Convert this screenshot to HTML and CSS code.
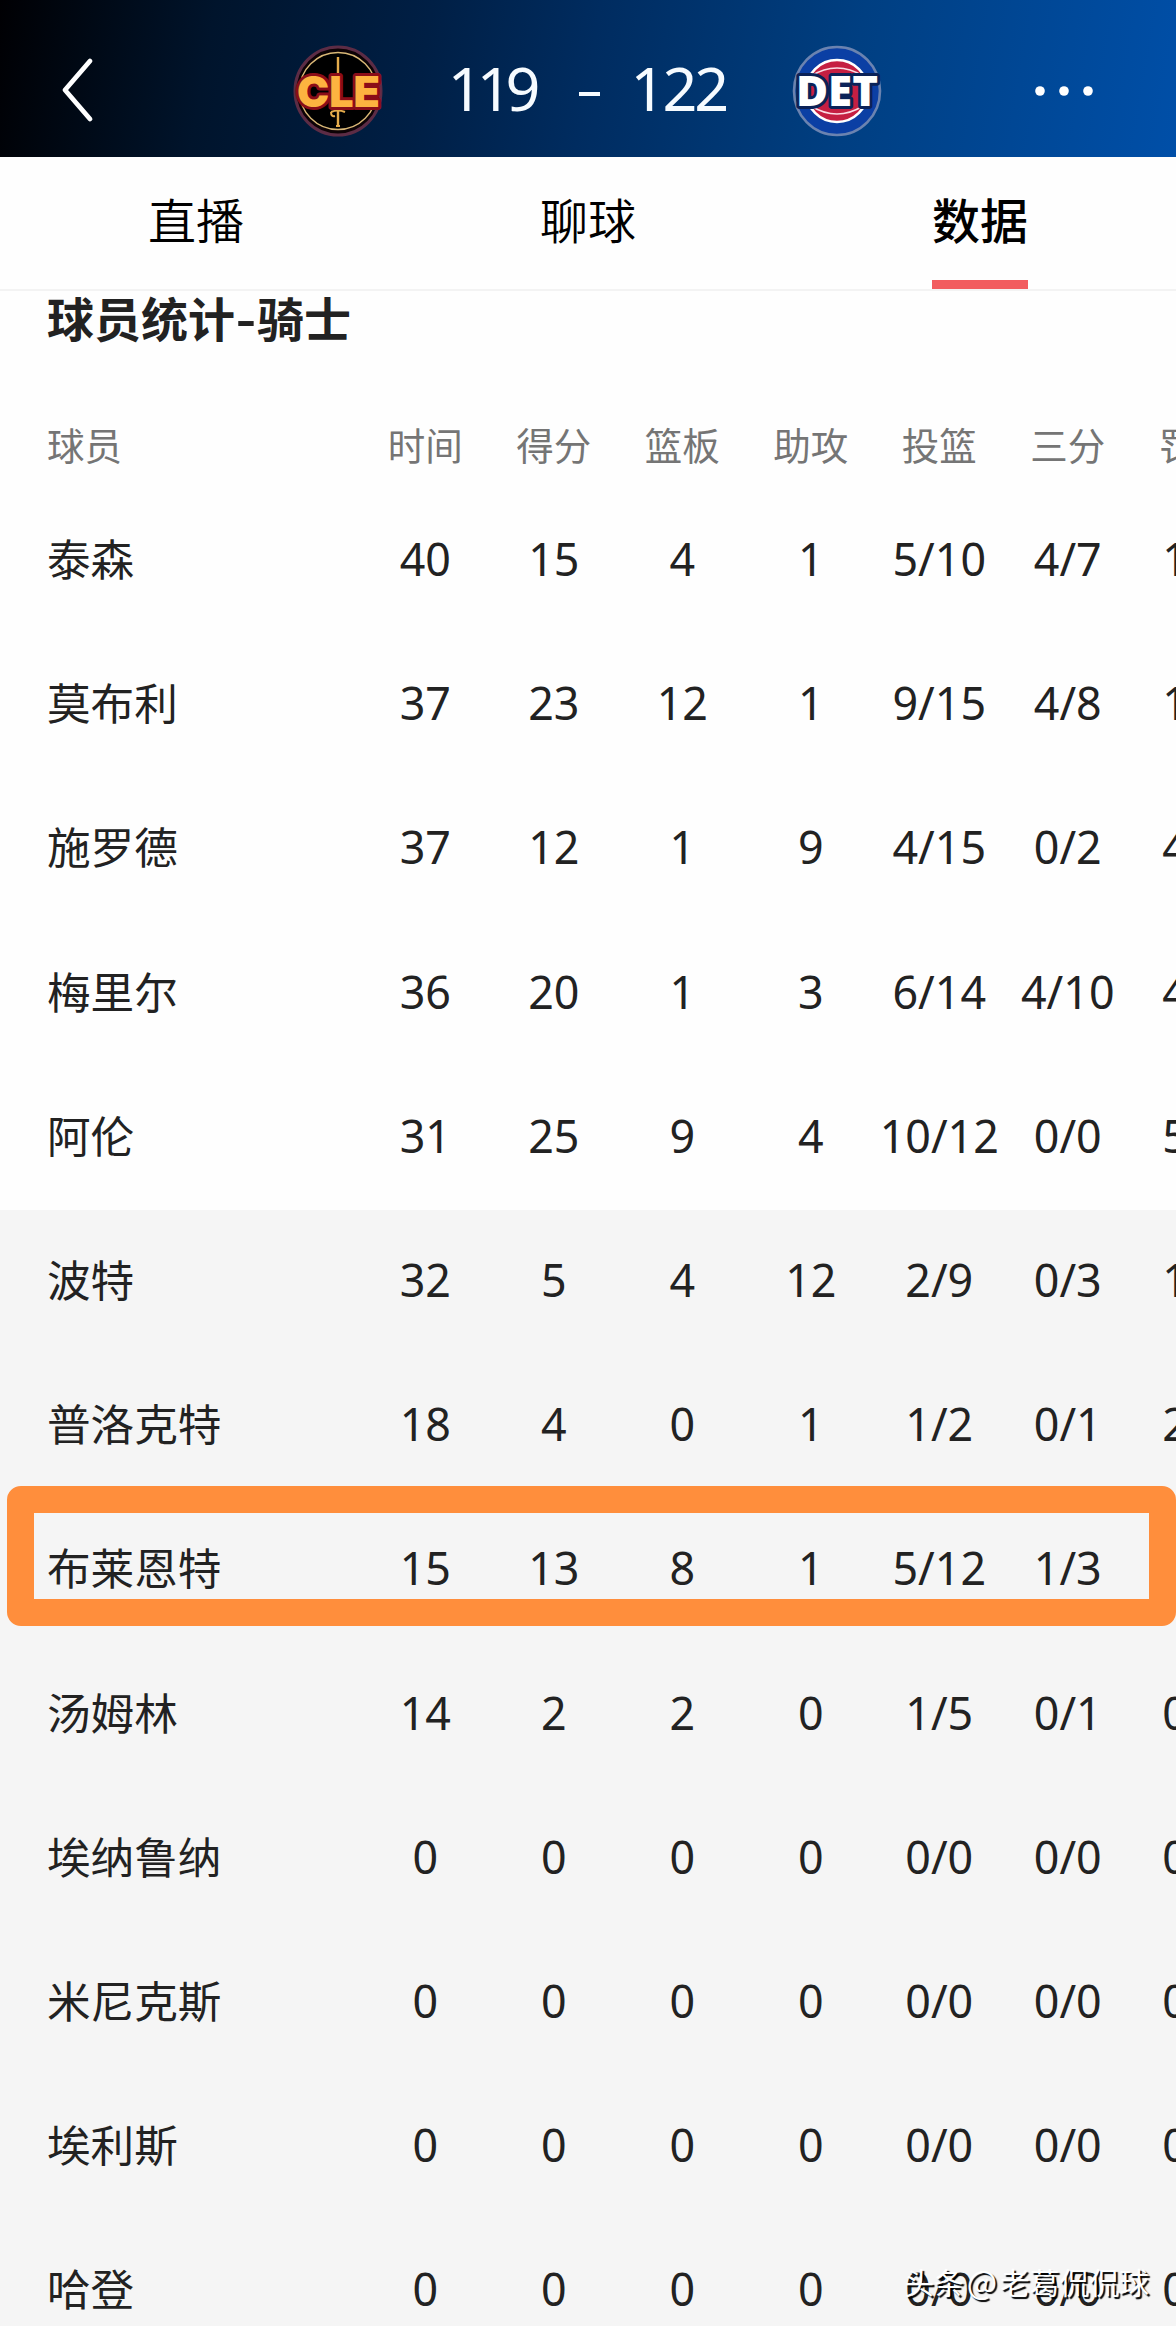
FILE: index.html
```html
<!doctype html>
<html lang="zh-CN">
<head>
<meta charset="utf-8">
<title>球员统计</title>
<link rel="stylesheet" href="styles.css">
</head>
<body>
<header class="topbar">
  <svg class="back" width="34" height="68" viewBox="0 0 34 68"><path d="M30 4 L5 33 L30 62" fill="none" stroke="#fff" stroke-width="4.8" stroke-linecap="round" stroke-linejoin="round"/></svg>
  <div class="match">
    <svg class="logo" width="96" height="96" viewBox="0 0 96 96">
      <ellipse cx="48" cy="48" rx="43" ry="44" fill="#0c0205" stroke="#5c2c45" stroke-width="3"/>
      <circle cx="48" cy="48" r="38.5" fill="#000" stroke="#d9b877" stroke-width="1.4"/>
      <path d="M48 14V36M48 66V84" stroke="#e5ac4c" stroke-width="2.4"/>
      <path d="M41 69q7-3 14 0M41 69q0 5 4 4M46 83h4" fill="none" stroke="#e5ac4c" stroke-width="2"/>
      <text class="cle" x="48.5" y="64" text-anchor="middle" textLength="83" lengthAdjust="spacingAndGlyphs">CLE</text>
    </svg>
    <div class="score">
      <span class="num home">119</span>
      <span class="dash"></span>
      <span class="num away">122</span>
    </div>
    <svg class="logo" width="96" height="96" viewBox="0 0 96 96">
      <ellipse cx="48" cy="48" rx="43" ry="44" fill="#0b3fa4" stroke="#6b83b0" stroke-width="2.6"/>
      <circle cx="48" cy="48" r="31" fill="#c51f42" stroke="#fff" stroke-width="2.6"/>
      <path d="M22 33Q48 17 74 33M22 63Q48 79 74 63" fill="none" stroke="#fbdce4" stroke-width="1.6"/>
      <text class="det" x="48" y="63" text-anchor="middle" textLength="82" lengthAdjust="spacingAndGlyphs">DET</text>
    </svg>
  </div>
  <svg class="more" width="60" height="12" viewBox="0 0 60 12"><circle cx="6" cy="6" r="4.8"/><circle cx="30" cy="6" r="4.8"/><circle cx="54" cy="6" r="4.8"/></svg>
</header>

<nav class="tabs">
  <a class="tab"><span>直播</span></a>
  <a class="tab"><span>聊球</span></a>
  <a class="tab active"><span>数据</span></a>
</nav>

<main>
  <h2 class="title">球员统计<i>-</i>骑士</h2>
  <div class="stats">
    <div class="row head"><span>球员</span><span>时间</span><span>得分</span><span>篮板</span><span>助攻</span><span>投篮</span><span>三分</span><span>罚球</span></div>
    <!-- 首发 -->
    <div class="row"><span>泰森</span><span>40</span><span>15</span><span>4</span><span>1</span><span>5/10</span><span>4/7</span><span>1/2</span></div>
    <div class="row"><span>莫布利</span><span>37</span><span>23</span><span>12</span><span>1</span><span>9/15</span><span>4/8</span><span>1/2</span></div>
    <div class="row"><span>施罗德</span><span>37</span><span>12</span><span>1</span><span>9</span><span>4/15</span><span>0/2</span><span>4/4</span></div>
    <div class="row"><span>梅里尔</span><span>36</span><span>20</span><span>1</span><span>3</span><span>6/14</span><span>4/10</span><span>4/4</span></div>
    <div class="row"><span>阿伦</span><span>31</span><span>25</span><span>9</span><span>4</span><span>10/12</span><span>0/0</span><span>5/6</span></div>
    <!-- 替补 -->
    <div class="row bench"><span>波特</span><span>32</span><span>5</span><span>4</span><span>12</span><span>2/9</span><span>0/3</span><span>1/2</span></div>
    <div class="row bench"><span>普洛克特</span><span>18</span><span>4</span><span>0</span><span>1</span><span>1/2</span><span>0/1</span><span>2/2</span></div>
    <div class="row bench marked"><span>布莱恩特</span><span>15</span><span>13</span><span>8</span><span>1</span><span>5/12</span><span>1/3</span><span></span></div>
    <div class="row bench"><span>汤姆林</span><span>14</span><span>2</span><span>2</span><span>0</span><span>1/5</span><span>0/1</span><span>0/0</span></div>
    <div class="row bench"><span>埃纳鲁纳</span><span>0</span><span>0</span><span>0</span><span>0</span><span>0/0</span><span>0/0</span><span>0/0</span></div>
    <div class="row bench"><span>米尼克斯</span><span>0</span><span>0</span><span>0</span><span>0</span><span>0/0</span><span>0/0</span><span>0/0</span></div>
    <div class="row bench"><span>埃利斯</span><span>0</span><span>0</span><span>0</span><span>0</span><span>0/0</span><span>0/0</span><span>0/0</span></div>
    <div class="row bench"><span>哈登</span><span>0</span><span>0</span><span>0</span><span>0</span><span>0/0</span><span>0/0</span><span>0/0</span></div>
  </div>
</main>
<div class="watermark">头条<b>@</b>老葛侃侃球</div>
</body>
</html>
```
FILE: styles.css
```css
*, *::after {
  box-sizing: border-box;
}
html {
  overflow: hidden;
}
body {
  margin: 0;
  position: relative;
  width: 1176px;
  height: 2326px;
  overflow: hidden;
  background: #fefefe;
  color: #222;
  font-family: "Noto Sans", "Noto Sans CJK SC", sans-serif;
}

/* 顶部比分 */
.topbar {
  display: flex;
  align-items: center;
  justify-content: space-between;
  height: 157px;
  padding: 24px 82px 0 60px;
  background: linear-gradient(100deg, #000003 0%, #00142c 18%, #001f45 36%, #002c60 50%, #003f82 72%, #004fa8 100%);
}
.back {
  display: block;
}
.match {
  display: flex;
  align-items: center;
  width: 595px;
  margin-left: 46px;
}
.logo {
  display: block;
  flex: none;
  overflow: visible;
}
.cle, .det {
  paint-order: stroke;
  stroke-linejoin: round;
  font-weight: 900;
}
.cle {
  font-family: Inter, "Liberation Sans", sans-serif;
  font-size: 43px;
  fill: #fdb340;
  stroke: #8a0d18;
  stroke-width: 6px;
}
.det {
  font-family: "Noto Sans", sans-serif;
  font-size: 43px;
  fill: #fff;
  stroke: #0b2258;
  stroke-width: 6px;
}
.score {
  flex: 1;
  display: flex;
  align-items: center;
  justify-content: center;
  height: 70px;
  color: #f6fbff;
  font-size: 61px;
  line-height: 70px;
}
.num {
  margin-top: -6px;
}
.home {
  letter-spacing: -6px;
  margin-right: 44px;
}
.away {
  letter-spacing: -3px;
  margin-left: 31px;
}
.dash {
  width: 21px;
  height: 4px;
  margin-top: 7px;
  background: #f6fbff;
}
.more {
  display: block;
  fill: #fff;
}

/* 标签栏 */
.tabs {
  display: flex;
  height: 134px;
  background: #fefefe;
  border-bottom: 2px solid #f3f3f3;
}
.tab {
  flex: 1;
  display: flex;
  justify-content: center;
  color: #000;
  font-family: "Noto Sans CJK SC", sans-serif;
  font-size: 48px;
  font-weight: 350;
  line-height: 122px;
}
.tab span {
  height: 132px;
}
.active {
  font-weight: 500;
}
.active span {
  border-bottom: 9px solid #f25c5f;
}

.title {
  margin: 0;
  height: 112px;
  padding-left: 47px;
  font-family: "Noto Sans CJK SC", sans-serif;
  font-size: 47px;
  font-weight: 700;
  line-height: 52px;
}
.title i {
  display: inline-block;
  width: 22px;
  text-align: center;
  font-style: normal;
  transform: scaleX(1.2);
}

/* 数据表 */
.row {
  display: grid;
  grid-template-columns: 361px repeat(7, 128.5px);
  align-items: center;
  position: relative;
  width: 1261px;
  height: 144.2px;
  padding-bottom: 4px;
  font-size: 44.8px;
  line-height: 60px;
  text-align: center;
}
.row span:first-child {
  margin-top: -4px;
  padding-left: 47px;
  text-align: left;
  font-family: "Noto Sans CJK SC", sans-serif;
  font-size: 43.6px;
}
.head {
  height: 86px;
  padding: 0 0 4px;
  color: #757575;
  font-family: "Noto Sans CJK SC", sans-serif;
  font-size: 37.5px;
}
.head span:first-child {
  margin-top: 0;
  font-size: 37.5px;
}
.bench {
  background: #f5f5f5;
}
/* 重点球员的橙色框 */
.marked::after {
  content: "";
  position: absolute;
  left: 7px;
  top: -12px;
  width: 1169px;
  height: 140px;
  border: 27px solid #ff8e3c;
  border-radius: 14px;
  z-index: 1;
}

.watermark {
  position: absolute;
  right: 27px;
  bottom: 23px;
  color: #fff;
  font-family: "Noto Sans CJK SC", sans-serif;
  font-size: 29.8px;
  line-height: 44px;
  text-shadow: 2px 2px 1px #000;
  white-space: nowrap;
}
.watermark b {
  font-weight: 400;
  font-size: 32px;
  margin: 0 3px;
}
```
